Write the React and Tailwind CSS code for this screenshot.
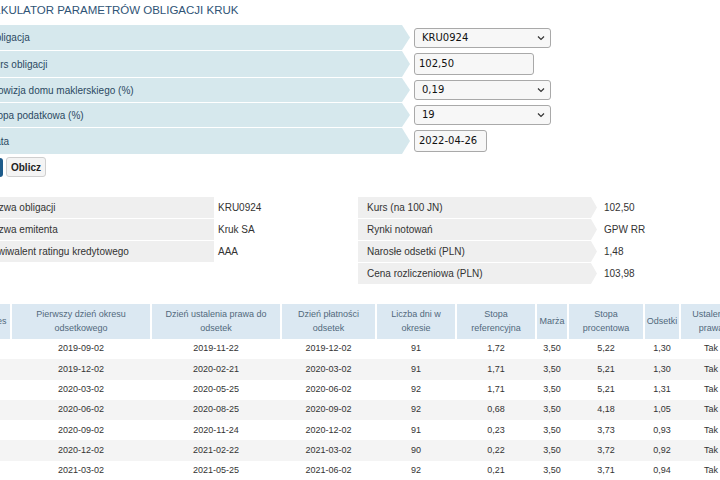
import React from "react";

const font = { fontFamily: '"Liberation Sans", Arial, sans-serif' };

function Chevron() {
  return (
    <svg width="8" height="5" viewBox="0 0 8 5" className="absolute right-[5px] top-1/2 -translate-y-1/2">
      <path d="M1 1 L4 4 L7 1" fill="none" stroke="#333" strokeWidth="1.2" />
    </svg>
  );
}

function Select({ value, w }) {
  return (
    <div
      className={`relative h-[20px] ${w} rounded-[3px] border border-[#a9a9a9] bg-[#f7f7f7] pl-[7px] text-[10px] leading-[18px] text-[#111]`}
      style={{ fontFamily: '"DejaVu Sans", Tahoma, sans-serif' }}
    >
      {value}
      <Chevron />
    </div>
  );
}

function Input({ value, w }) {
  return (
    <div
      className={`h-[22px] ${w} rounded-[3px] border border-[#a9a9a9] bg-[#f7f7f7] pl-[4px] text-[10px] leading-[20px] text-[#111]`}
      style={{ fontFamily: '"DejaVu Sans", Tahoma, sans-serif' }}
    >
      {value}
    </div>
  );
}

const formRows = [
  { label: "Obligacja", h: "h-[25px]", ctrl: <Select value="KRU0924" w="w-[137px]" /> },
  { label: "Kurs obligacji", h: "h-[26px]", ctrl: <Input value="102,50" w="w-[120px]" /> },
  { label: "Prowizja domu maklerskiego (%)", h: "h-[24px]", ctrl: <Select value="0,19" w="w-[137px]" /> },
  { label: "Stopa podatkowa (%)", h: "h-[24px]", ctrl: <Select value="19" w="w-[137px]" /> },
  { label: "Data", h: "h-[26px]", ctrl: <Input value="2022-04-26" w="w-[73px]" /> },
];

const leftInfo = [
  ["Nazwa obligacji", "KRU0924"],
  ["Nazwa emitenta", "Kruk SA"],
  ["Ekwiwalent ratingu kredytowego", "AAA"],
];
const rightInfo = [
  ["Kurs (na 100 JN)", "102,50"],
  ["Rynki notowań", "GPW RR"],
  ["Narosłe odsetki (PLN)", "1,48"],
  ["Cena rozliczeniowa (PLN)", "103,98"],
];

const headers = [
  "Okres",
  "Pierwszy dzień okresu odsetkowego",
  "Dzień ustalenia prawa do odsetek",
  "Dzień płatności odsetek",
  "Liczba dni w okresie",
  "Stopa referencyjna",
  "Marża",
  "Stopa procentowa",
  "Odsetki",
  "Ustalenie prawa",
];

const data = [
  ["1", "2019-09-02", "2019-11-22", "2019-12-02", "91", "1,72", "3,50", "5,22", "1,30", "Tak"],
  ["2", "2019-12-02", "2020-02-21", "2020-03-02", "91", "1,71", "3,50", "5,21", "1,30", "Tak"],
  ["3", "2020-03-02", "2020-05-25", "2020-06-02", "92", "1,71", "3,50", "5,21", "1,31", "Tak"],
  ["4", "2020-06-02", "2020-08-25", "2020-09-02", "92", "0,68", "3,50", "4,18", "1,05", "Tak"],
  ["5", "2020-09-02", "2020-11-24", "2020-12-02", "91", "0,23", "3,50", "3,73", "0,93", "Tak"],
  ["6", "2020-12-02", "2021-02-22", "2021-03-02", "90", "0,22", "3,50", "3,72", "0,92", "Tak"],
  ["7", "2021-03-02", "2021-05-25", "2021-06-02", "92", "0,21", "3,50", "3,71", "0,94", "Tak"],
];

const gridCols = "grid grid-cols-[31px_140px_130px_95px_80px_80px_32px_76px_36px_62px]";

export default function App() {
  return (
    <div className="relative h-[480px] w-[720px] overflow-hidden bg-white" style={font}>
      <div className="ml-[-21px] w-[800px]">
        {/* Title */}
        <div className="h-[25px] pt-[3px] text-[11.5px] leading-[14px] text-[#2f5476]">
          KALKULATOR PARAMETRÓW OBLIGACJI KRUK
        </div>

        {/* Form */}
        <div className="flex flex-col gap-[1px]">
          {formRows.map((r) => (
            <div key={r.label} className={`flex items-center ${r.h}`}>
              <div className="flex h-full w-[431px] items-center bg-[#d6e8ed] pl-[9px] text-[10px] text-[#2b4862] [clip-path:polygon(0_0,calc(100%-8px)_0,100%_50%,calc(100%-8px)_100%,0_100%)]">
                {r.label}
              </div>
              <div className="ml-[4px]">{r.ctrl}</div>
            </div>
          ))}
        </div>

        {/* Buttons */}
        <div className="mt-[3px] flex items-center gap-[3px]">
          <div className="h-[19px] w-[24px] rounded-[3px] bg-[#1d5b8a]" />
          <div className="flex h-[20px] w-[40px] items-center justify-center rounded-[3px] border border-[#cfcfcf] bg-[#f4f4f4] text-[10px] font-bold text-[#222]">
            Oblicz
          </div>
        </div>

        {/* Info */}
        <div className="mt-[20px] flex">
          <div className="flex w-[361px] flex-col gap-[1px]">
            {leftInfo.map(([l, v]) => (
              <div key={l} className="flex h-[21px] items-center text-[10px] text-[#333]">
                <div className="flex h-full w-[235px] items-center bg-[#efefef] pl-[7px]">{l}</div>
                <div className="pl-[4px]">{v}</div>
              </div>
            ))}
          </div>
          <div className="ml-[18px] flex flex-col gap-[1px]">
            {rightInfo.map(([l, v]) => (
              <div key={l} className="flex h-[21px] items-center text-[10px] text-[#333]">
                <div className="flex h-full w-[239px] items-center bg-[#efefef] pl-[9px] [clip-path:polygon(0_0,calc(100%-6px)_0,100%_50%,calc(100%-6px)_100%,0_100%)]">
                  {l}
                </div>
                <div className="pl-[7px]">{v}</div>
              </div>
            ))}
          </div>
        </div>

        {/* Table */}
        <div className="mt-[20px]">
          <div className={`${gridCols} h-[35px]`}>
            {headers.map((h, i) => (
              <div
                key={h}
                className={`flex items-center justify-center bg-[#dbe8f2] px-[4px] text-center text-[9px] leading-[13.5px] text-[#52687c] ${i > 0 ? "border-l-2 border-white" : ""}`}
              >
                {h}
              </div>
            ))}
          </div>
          {data.map((row, ri) => (
            <div key={ri} className={`${gridCols} h-[20.3px] ${ri % 2 === 1 ? "bg-[#f4f4f4]" : "bg-white"}`}>
              {row.map((c, ci) => (
                <div
                  key={ci}
                  className={`flex items-center justify-center text-[9px] text-[#333] ${ci > 0 ? "border-l-2 border-transparent" : ""}`}
                >
                  {c}
                </div>
              ))}
            </div>
          ))}
        </div>
      </div>
    </div>
  );
}
